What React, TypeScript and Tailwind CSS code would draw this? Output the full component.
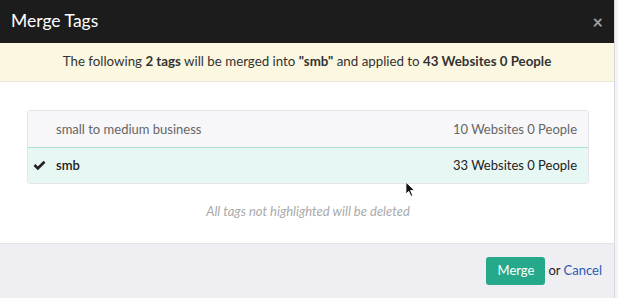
import React from 'react';

const tags = [
  { name: 'small to medium business', count: '10 Websites 0 People', selected: false },
  { name: 'smb', count: '33 Websites 0 People', selected: true },
];

function CheckIcon() {
  return (
    <svg viewBox="0 0 14 12" className="w-[13px] h-[11px]" fill="#222">
      <path d="M0.5 6.5 L2.6 4.4 L5.2 7 L11.4 0.8 L13.5 2.9 L5.2 11.2 Z" />
    </svg>
  );
}

function Cursor() {
  return (
    <svg viewBox="0 0 12 18" className="absolute left-[405px] top-[181px] w-[11px] h-[17px]">
      <path d="M1 1 L1 14 L4 11 L6.5 16.5 L8.5 15.5 L6 10 L10.5 10 Z" fill="#111" stroke="#fff" strokeWidth="1" />
    </svg>
  );
}

export default function App() {
  return (
    <div className="w-[618px] h-[298px] bg-[#f4f4f6] overflow-hidden" style={{ fontFamily: 'Lato, "Open Sans", sans-serif' }}>
      <div className="relative w-[615px] h-full flex flex-col bg-white border-r border-[#d8d8dc]">
        {/* Header */}
        <div className="h-[43px] bg-[#1c1c1c] flex items-center justify-between pl-[11px] pr-[11px]">
          <h2 className="text-white text-[17.5px] font-normal">Merge Tags</h2>
          <span className="text-[#a0a0a0] text-[18px] font-bold leading-none">×</span>
        </div>

        {/* Banner */}
        <div className="h-[39px] bg-[#fcf7e0] border-b border-[#ece8d6] flex items-center justify-center text-[13.3px] text-[#333]">
          <p>
            The following <b>2 tags</b> will be merged into <b>"smb"</b> and applied to <b>43 Websites 0 People</b>
          </p>
        </div>

        {/* Body */}
        <div className="flex-1 flex flex-col pt-[28px] pl-[27px] pr-[25px]">
          <div className="rounded-[3px] border border-[#e4e4ea] overflow-hidden">
            {tags.map((tag) => (
              <div
                key={tag.name}
                className={
                  tag.selected
                    ? 'h-[37px] flex items-center justify-between pl-[5px] pr-[11px] bg-[#e7f7f4] border border-[#a6e0d6] -m-px text-[#222] text-[13px]'
                    : 'h-[37px] flex items-center justify-between pl-[28px] pr-[11px] bg-[#f7f6f9] text-[#666] text-[13px]'
                }
              >
                <div className="flex items-center gap-[10px]">
                  {tag.selected && <CheckIcon />}
                  <span className={tag.selected ? 'font-semibold' : ''}>{tag.name}</span>
                </div>
                <span>{tag.count}</span>
              </div>
            ))}
          </div>
          <p className="text-center italic text-[#aaa] text-[13px] mt-[18px]">All tags not highlighted will be deleted</p>
        </div>

        {/* Footer */}
        <div className="h-[55px] bg-[#efeef2] border-t border-[#e2e1e6] flex items-center justify-end pr-[12px] gap-[3px] text-[13px]">
          <button className="w-[59px] h-[28px] rounded-[3px] bg-[#26a98a] text-white text-[13px]">Merge</button>
          <span className="text-[#222]">or</span>
          <a className="text-[#2a5bb0]">Cancel</a>
        </div>

        <Cursor />
      </div>
    </div>
  );
}
